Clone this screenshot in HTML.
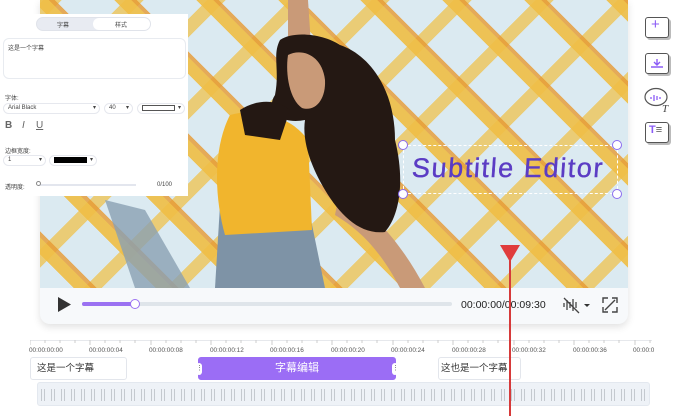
<!DOCTYPE html>
<html><head><meta charset="utf-8"><style>
*{margin:0;padding:0;box-sizing:border-box}
body{width:682px;height:416px;background:#fff;position:relative;overflow:hidden;font-family:"Liberation Sans","Noto Sans CJK SC",sans-serif;color:#333}
.abs{position:absolute}
#card{left:40px;top:0;width:588px;height:324px;border-radius:0 0 10px 10px;background:#f7f9fb;box-shadow:0 3px 8px rgba(0,0,0,.12)}
#video{left:40px;top:0;width:588px;height:288px;overflow:hidden;background:#dbeaf1}
.pat{position:absolute;inset:0;background:
repeating-linear-gradient(45deg,transparent 0 24px,rgba(242,185,50,.9) 24px 36px,rgba(232,145,30,.8) 36px 40px,transparent 40px 58px),
repeating-linear-gradient(-45deg,transparent 0 24px,rgba(242,190,60,.75) 24px 37px,transparent 37px 58px);opacity:.9}
.panel{left:0;top:14px;width:188px;height:182px;background:#fff;font-size:6px;color:#444}
.sel{position:absolute;height:11px;border:1px solid #e6e8ee;border-radius:6px;font-size:6px;padding-left:4px;line-height:9px;background:#fff}
.sel:after{content:"▾";position:absolute;right:3px;top:0;font-size:6px}
.tl{font-size:6.4px;color:#555;top:347px;position:absolute}
.clip{position:absolute;top:357px;height:23px;border:1px solid #e3e6ec;border-radius:3px;background:#fff;font-size:9.5px;line-height:21px;padding-left:6px;color:#333}
.ic{position:absolute;left:645px;width:24px;height:21px;border:1.3px solid #555;border-radius:3px;box-shadow:2px 2px 0 #bbb;background:#fff}
</style></head><body>
<div id="card" class="abs"></div>
<div id="video" class="abs"><div class="pat"></div>
<svg class="abs" style="left:0;top:0" width="588" height="288">
<path d="M65 200 L105 210 L150 288 L95 288Z" fill="#8aa0b3" opacity=".8"/>
<path d="M248 0 L268 0 L272 60 L258 70 L248 40Z" fill="#c99a78"/>
<path d="M300 190 C330 210 360 240 385 288 L360 288 C340 250 320 230 295 215Z" fill="#c99a78"/>
<path d="M180 205 L270 215 L285 288 L175 288Z" fill="#7e93a6"/>
<path d="M190 115 C215 108 250 115 268 140 L272 230 L185 235 C175 200 172 150 190 115Z" fill="#f1b52d"/>
<path d="M240 40 C255 30 285 35 300 45 C330 55 355 90 355 140 C365 180 360 215 345 232 C320 235 300 215 285 190 C270 165 262 140 265 120 C240 125 225 110 235 95 C240 70 232 55 240 40Z" fill="#241813"/>
<path d="M248 55 C262 48 282 55 285 80 C286 100 275 112 262 108 C250 100 245 75 248 55Z" fill="#c99a78"/>
<path d="M200 110 C215 100 235 98 250 110 L240 140 L205 135Z" fill="#241813"/>
</svg>
<div class="abs" style="left:363px;top:145px;width:215px;height:49px;border:1px dashed #fff"></div>
<div class="abs" style="left:372px;top:153px;font-size:27px;color:#5b3cc4;letter-spacing:1.6px;transform:skewX(-4deg);-webkit-text-stroke:.4px #5b3cc4">Subtitle Editor</div>
<div class="abs" style="left:358px;top:140px;width:10px;height:10px;border:1.5px solid #8b6cf0;border-radius:50%;background:#fff"></div>
<div class="abs" style="left:572px;top:140px;width:10px;height:10px;border:1.5px solid #8b6cf0;border-radius:50%;background:#fff"></div>
<div class="abs" style="left:358px;top:189px;width:10px;height:10px;border:1.5px solid #8b6cf0;border-radius:50%;background:#fff"></div>
<div class="abs" style="left:572px;top:189px;width:10px;height:10px;border:1.5px solid #8b6cf0;border-radius:50%;background:#fff"></div>
</div>
<svg class="abs" style="left:58px;top:297px" width="14" height="15"><path d="M0 0L13 7.5L0 15Z" fill="#333"/></svg>
<div class="abs" style="left:82px;top:302px;width:370px;height:4px;border-radius:2px;background:#dfe5ea"></div>
<div class="abs" style="left:82px;top:302px;width:53px;height:4px;border-radius:2px;background:#9b72f2"></div>
<div class="abs" style="left:130px;top:299px;width:10px;height:10px;border-radius:50%;border:1.5px solid #9b72f2;background:#fff"></div>
<div class="abs" style="left:461px;top:299px;font-size:10.5px;color:#222">00:00:00/00:09:30</div>
<svg class="abs" style="left:562px;top:296px" width="30" height="18"><g stroke="#444" stroke-width="1.3"><path d="M2 7v4M5 4v10M8 6v6M11 3v12M14 6v6M2 2L17 17"/></g><path d="M22 8l3 3 3-3" fill="#333"/></svg>
<svg class="abs" style="left:602px;top:297px" width="16" height="16"><g stroke="#444" stroke-width="1.4" fill="none"><path d="M1 6V1h5M15 10v5h-5M1 10v5h5M15 6V1h-5M3 13L13 3"/></g></svg>
<div class="abs panel">
<div class="abs" style="left:36px;top:3px;width:115px;height:14px;border-radius:7px;background:#e8ebf2;border:1px solid #e0e3ea"></div>
<div class="abs" style="left:93px;top:4px;width:57px;height:12px;border-radius:6px;background:#fff"></div>
<div class="abs" style="left:57px;top:6px">字幕</div><div class="abs" style="left:115px;top:6px">样式</div>
<div class="abs" style="left:3px;top:24px;width:183px;height:41px;border:1px solid #e8ebf0;border-radius:6px;padding:4px 4px"><span>这是一个字幕</span></div>
<div class="abs" style="left:5px;top:79px">字体:</div>
<div class="sel" style="left:3px;top:89px;width:97px">Arial Black</div>
<div class="sel" style="left:104px;top:89px;width:29px">40</div>
<div class="sel" style="left:137px;top:89px;width:48px"><span style="display:inline-block;width:33px;height:6px;border:1px solid #555;margin-top:1px"></span></div>
<div class="abs" style="left:5px;top:106px;font-size:10px;font-weight:bold;color:#666">B</div>
<div class="abs" style="left:22px;top:106px;font-size:10px;font-style:italic;color:#666">I</div>
<div class="abs" style="left:36px;top:106px;font-size:10px;text-decoration:underline;color:#666">U</div>
<div class="abs" style="left:5px;top:132px">边框宽度:</div>
<div class="sel" style="left:3px;top:141px;width:43px">1</div>
<div class="sel" style="left:49px;top:141px;width:48px"><span style="display:inline-block;width:33px;height:6px;background:#000;margin-top:1px"></span></div>
<div class="abs" style="left:5px;top:168px">透明度:</div>
<div class="abs" style="left:38px;top:170px;width:98px;height:1.5px;background:#e3e6ee"></div>
<div class="abs" style="left:36px;top:167px;width:5px;height:5px;border:1px solid #888;border-radius:50%;background:#fff"></div>
<div class="abs" style="left:157px;top:168px">0/100</div>
</div>
<div class="ic" style="top:17px"><div class="abs" style="left:5px;top:-2px;font-size:15px;color:#8b5cf6">+</div></div>
<div class="ic" style="top:53px"><svg class="abs" style="left:4px;top:2px" width="14" height="14"><path d="M1 11h12M7 3v6M4 6l3 3 3-3" stroke="#8b5cf6" stroke-width="1.4" fill="none"/></svg></div>
<svg class="abs" style="left:643px;top:87px" width="30" height="26"><ellipse cx="13" cy="10" rx="11" ry="8.5" fill="#fff" stroke="#555" stroke-width="1.2"/><path d="M8 10v2M11 8v6M14 9v4M17 10v2" stroke="#8b5cf6" stroke-width="1.3"/><text x="19" y="25" font-size="11" font-style="italic" font-family="Liberation Serif" fill="#444">T</text></svg>
<div class="ic" style="top:122px"><div class="abs" style="left:3px;top:1px;font-size:11px;font-weight:bold;color:#8b5cf6">T<span style="color:#555;font-weight:normal">≡</span></div></div>
<div class="abs" style="left:30px;top:340px;width:622px;height:1px;background:#e6e8ec"></div>
<svg class="abs" style="left:30px;top:340px" width="622" height="6"><g stroke="#ccc"><path d="M0 0v5M15 0v3M30 0v3M45 0v3M60 0v5M75 0v3M90 0v3M105 0v3M121 0v5M136 0v3M151 0v3M166 0v3M181 0v5M196 0v3M211 0v3M226 0v3M242 0v5M257 0v3M272 0v3M287 0v3M302 0v5M317 0v3M332 0v3M347 0v3M363 0v5M378 0v3M393 0v3M408 0v3M423 0v5M438 0v3M453 0v3M468 0v3M484 0v5M499 0v3M514 0v3M529 0v3M544 0v5M559 0v3M574 0v3M589 0v3M605 0v5M620 0v3"/></g></svg>
<div class="tl" style="left:29px">00:00:00:00</div>
<div class="tl" style="left:89px">00:00:00:04</div>
<div class="tl" style="left:149px">00:00:00:08</div>
<div class="tl" style="left:210px">00:00:00:12</div>
<div class="tl" style="left:270px">00:00:00:16</div>
<div class="tl" style="left:331px">00:00:00:20</div>
<div class="tl" style="left:391px">00:00:00:24</div>
<div class="tl" style="left:452px">00:00:00:28</div>
<div class="tl" style="left:512px">00:00:00:32</div>
<div class="tl" style="left:573px">00:00:00:36</div>
<div class="tl" style="left:633px">00:00:0</div>
<div class="clip" style="left:30px;width:97px">这是一个字幕</div>
<div class="clip" style="left:198px;width:198px;background:#9b6df5;border-color:#9b6df5;color:#fff;text-align:center;padding:0;font-size:11px">字幕编辑
<div class="abs" style="left:-3px;top:5px;width:6px;height:12px;background:#fff;border-radius:3px;color:#666;font-size:7px;line-height:12px">⋮</div>
<div class="abs" style="right:-3px;top:5px;width:6px;height:12px;background:#fff;border-radius:3px;color:#666;font-size:7px;line-height:12px">⋮</div></div>
<div class="clip" style="left:438px;width:83px;padding-left:2px">这也是一个字幕</div>
<div class="abs" style="left:37px;top:382px;width:613px;height:24px;background:#eef2f7;border:1px solid #e3e8ef;border-radius:3px;background-image:repeating-linear-gradient(90deg,transparent 0 3px,#c4c9cf 3px 4px,transparent 4px 6px,#c4c9cf 6px 7px,transparent 7px 10px);background-size:100% 12px;background-position:0 6px;background-repeat:no-repeat"></div>
<div class="abs" style="left:509px;top:258px;width:2px;height:158px;background:#d63a3a"></div>
<svg class="abs" style="left:500px;top:245px" width="20" height="18"><path d="M0 0H20L10 17Z" fill="#e03c3c"/></svg>
</body></html>
